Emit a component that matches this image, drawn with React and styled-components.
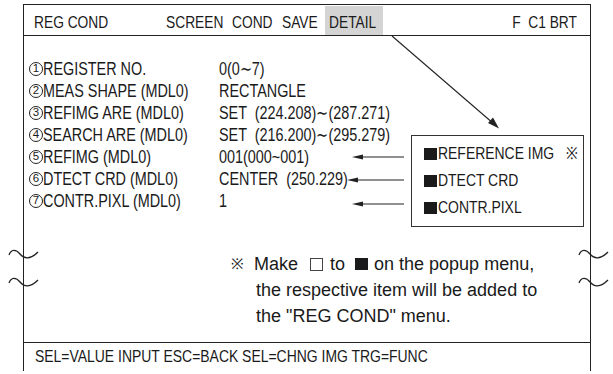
import React from 'react';
import styled, { createGlobalStyle, css } from 'styled-components';

const GlobalStyle = createGlobalStyle`
  body {
    margin: 0;
    background: #fff;
    font-family: "Liberation Sans", Arial, sans-serif;
    color: #1a1a1a;
  }
`;

const Page = styled.div`
  position: relative;
  width: 613px;
  height: 374px;
  overflow: hidden;
  background: #fff;
`;

// no condensed face is installed, so squeeze Liberation Sans
const Cond = styled.span`
  display: inline-block;
  white-space: pre;
  font-size: ${p => p.size || 18}px;
  line-height: 1.15;
  transform: scaleX(${p => p.sx || 0.8});
  transform-origin: ${p => (p.right ? 'right' : 'left')} center;
`;

const Frame = styled.div`
  margin: 4px 0 0 23px;
  width: 566px;
  border: 1.5px solid #222;
  border-bottom: none;
  display: flex;
  flex-direction: column;
`;

const Header = styled.div`
  height: 30px;
  border-bottom: 1.5px solid #222;
  display: grid;
  grid-template-columns: 132px 66px 50px 43px 58px 1fr;
  padding: 0 13px 0 10px;
`;

const HeadCell = styled.div`
  display: flex;
  align-items: center;
  padding-top: 5px;
  ${p =>
    p.active &&
    css`
      background: #d4d4d4;
      padding-left: 4px;
      margin-top: 1px;
      padding-top: 4px;
    `}
  ${p =>
    p.right &&
    css`
      justify-content: flex-end;
    `}
`;

const Body = styled.div`
  position: relative;
  height: 307px;
  padding: 22px 0 0 5px;
  box-sizing: border-box;
  border-bottom: 1.5px solid #222;
`;

const List = styled.div`
  display: flex;
  flex-direction: column;
`;

const Row = styled.div`
  display: grid;
  grid-template-columns: 190px auto;
  height: 22px;
  align-items: center;
`;

const Label = styled.div`
  display: flex;
  align-items: center;
`;

const Num = styled.span`
  width: 14px;
  height: 14px;
  box-sizing: border-box;
  flex: none;
  border: 1.2px solid #222;
  border-radius: 50%;
  display: inline-flex;
  align-items: center;
  justify-content: center;
  font-size: 11.5px;
  line-height: 1;
`;

const Popup = styled.div`
  position: absolute;
  left: 387px;
  top: 99px;
  width: 173px;
  height: 92px;
  border: 1.5px solid #333;
  box-sizing: border-box;
  background: #fff;
  padding: 4px 0 0 12px;
  display: flex;
  flex-direction: column;
`;

const PopupItem = styled.div`
  height: 27px;
  display: flex;
  align-items: center;
`;

const Box = styled.span`
  width: 13px;
  height: 12px;
  flex: none;
  background: #1a1a1a;
  margin-right: 1px;
  ${p =>
    p.hollow &&
    css`
      background: #fff;
      border: 1px solid #444;
      box-sizing: border-box;
      width: 13px;
      height: 13px;
    `}
`;

const Note = styled.div`
  margin: 39px 0 0 202px;
  font-size: 18px;
  line-height: 26px;
`;

const NoteLine = styled.div`
  display: flex;
  align-items: center;
  white-space: pre;
  padding-left: ${p => (p.indent ? '25px' : '0')};
`;

const Mark = styled.span`
  font-size: 15px;
  margin-right: 10px;
`;

const InlineBox = styled(Box)`
  margin: 0 ${p => (p.hollow ? 7 : 6)}px 0 ${p => (p.hollow ? 12 : 10)}px;
`;

const Footer = styled.div`
  height: 28px;
  display: flex;
  align-items: center;
  padding-left: 11px;
`;

const Overlay = styled.svg`
  position: absolute;
  left: 0;
  top: 0;
  pointer-events: none;
`;

const rows = [
  ['REGISTER NO.', '0(0\u223C7)'],
  ['MEAS SHAPE (MDL0)', 'RECTANGLE'],
  ['REFIMG ARE (MDL0)', 'SET  (224.208)\u223C(287.271)'],
  ['SEARCH ARE (MDL0)', 'SET  (216.200)\u223C(295.279)'],
  ['REFIMG (MDL0)', '001(000~001)'],
  ['DTECT CRD (MDL0)', 'CENTER  (250.229)'],
  ['CONTR.PIXL (MDL0)', '1'],
];

function Wave({ x, y }) {
  return (
    <path
      d={`M${x} ${y + 3} C${x + 2} ${y - 3}, ${x + 7} ${y - 3}, ${x + 11} ${y + 2} S${x + 21} ${y + 8}, ${x + 29} ${y}`}
      fill="none"
      stroke="#222"
      strokeWidth="1.3"
    />
  );
}

function Arrow({ x1, x2, y }) {
  return (
    <g>
      <line x1={x1 + 8} y1={y} x2={x2} y2={y} stroke="#222" strokeWidth="1.2" />
      <path d={`M${x1} ${y} L${x1 + 11} ${y - 2.5} L${x1 + 11} ${y + 2.5} Z`} fill="#222" />
    </g>
  );
}

export default function App() {
  return (
    <Page>
      <GlobalStyle />
      <Frame>
        <Header>
          <HeadCell><Cond size={17} sx={0.81}>REG COND</Cond></HeadCell>
          <HeadCell><Cond size={17} sx={0.81}>SCREEN</Cond></HeadCell>
          <HeadCell><Cond size={17} sx={0.81}>COND</Cond></HeadCell>
          <HeadCell><Cond size={17} sx={0.81}>SAVE</Cond></HeadCell>
          <HeadCell active><Cond size={17} sx={0.81}>DETAIL</Cond></HeadCell>
          <HeadCell right><Cond size={17} sx={0.81} right>F  C1 BRT</Cond></HeadCell>
        </Header>
        <Body>
          <List>
            {rows.map(([label, value], i) => (
              <Row key={label}>
                <Label>
                  <Num>{i + 1}</Num>
                  <Cond>{label}</Cond>
                </Label>
                <Cond>{value}</Cond>
              </Row>
            ))}
          </List>
          <Popup>
            <PopupItem><Box /><Cond size={17} sx={0.82}>REFERENCE IMG   ※</Cond></PopupItem>
            <PopupItem><Box /><Cond size={17} sx={0.82}>DTECT CRD</Cond></PopupItem>
            <PopupItem><Box /><Cond size={17} sx={0.82}>CONTR.PIXL</Cond></PopupItem>
          </Popup>
          <Note>
            <NoteLine><Mark>※</Mark>Make<InlineBox hollow />to<InlineBox />on the popup menu,</NoteLine>
            <NoteLine indent>the respective item will be added to</NoteLine>
            <NoteLine indent>the "REG COND" menu.</NoteLine>
          </Note>
        </Body>
        <Footer><Cond size={17} sx={0.82}>SEL=VALUE INPUT ESC=BACK SEL=CHNG IMG TRG=FUNC</Cond></Footer>
      </Frame>
      <Overlay width="613" height="374">
        <line x1="392" y1="36" x2="494" y2="124" stroke="#222" strokeWidth="1.1" />
        <path d="M499 128.5 L488 123 L493 117.5 Z" fill="#222" />
        <Arrow x1={352} x2={404} y={157} />
        <Arrow x1={347} x2={404} y={180} />
        <Arrow x1={352} x2={404} y={204} />
        <Wave x={9} y={252} />
        <Wave x={9} y={280} />
        <Wave x={579} y={252} />
        <Wave x={579} y={280} />
      </Overlay>
    </Page>
  );
}
